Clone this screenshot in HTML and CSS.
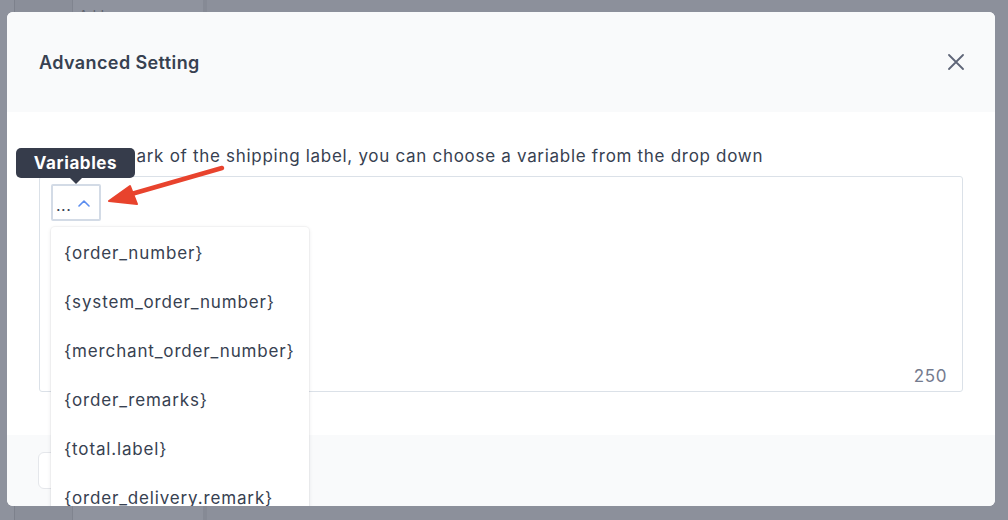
FILE: index.html
```html
<!DOCTYPE html>
<html lang="en">
<head>
<meta charset="utf-8">
<title>Advanced Setting</title>
<link rel="stylesheet" href="styles.css">
</head>
<body>
<div class="backdrop">
  <div class="bcol bcol-a"></div>
  <div class="bcol bcol-b"></div>
  <div class="bcol bcol-c"><span class="btext">Address</span></div>
  <div class="bcol bcol-d"></div>
</div>

<div class="modal">
  <div class="modal-header">
    <h2 class="modal-title">Advanced Setting</h2>
    <button class="close-btn" aria-label="Close">
      <svg width="16" height="16" viewBox="0 0 16 16"><path d="M1 1 L15 15 M15 1 L1 15" stroke="#5f6678" stroke-width="1.8" stroke-linecap="round" fill="none"/></svg>
    </button>
  </div>
  <div class="modal-body">
    <div class="field-label">Orders remark of the shipping label, you can choose a variable from the drop down</div>
    <div class="textbox">
      <div class="var-btn">
        <span class="dots">...</span>
        <svg class="chev" width="12" height="8" viewBox="0 0 12 8"><path d="M1 7 L6 2 L11 7" stroke="#5b8def" stroke-width="1.6" fill="none" stroke-linecap="round" stroke-linejoin="round"/></svg>
        <div class="tooltip">Variables</div>
      </div>
      <ul class="dropdown">
        <li>{order_number}</li>
        <li>{system_order_number}</li>
        <li>{merchant_order_number}</li>
        <li>{order_remarks}</li>
        <li>{total.label}</li>
        <li>{order_delivery.remark}</li>
      </ul>
      <span class="counter">250</span>
    </div>
  </div>
  <div class="modal-footer">
    <button class="cancel-btn">Cancel</button>
  </div>
</div>

<svg class="red-arrow" width="1008" height="520" viewBox="0 0 1008 520">
  <path d="M222 168 L128 195" stroke="#e8432d" stroke-width="4.5" stroke-linecap="round" fill="none"/>
  <path d="M109 201 L130 186 L137 204 Z" fill="#e8432d" stroke="#e8432d" stroke-width="2" stroke-linejoin="round"/>
</svg>
</body>
</html>
```

FILE: styles.css
```css
* { box-sizing: border-box; }
html, body { margin: 0; padding: 0; }
body {
  width: 1008px;
  height: 520px;
  overflow: hidden;
  position: relative;
  font-family: Inter, "Liberation Sans", sans-serif;
  background: #8c909b;
}

.backdrop {
  display: flex;
  height: 520px;
}
.bcol { height: 100%; }
.bcol-a { width: 15px; background: #8e929d; border-right: 1px solid #7d818c; }
.bcol-b { width: 58px; background: #8a8e99; border-right: 1px solid #80848f; }
.bcol-c { width: 134px; background: #8f939e; border-right: 4px solid #868a95; padding: 4px 6px; }
.bcol-d { flex: 1; background: #8c909b; }
.btext { font-size: 13px; color: #5e626c; }

.modal {
  position: absolute;
  left: 7px;
  top: 12px;
  width: 988px;
  height: 494px;
  background: #ffffff;
  border-radius: 6px;
  overflow: hidden;
  display: flex;
  flex-direction: column;
}

.modal-header {
  height: 100px;
  flex: none;
  background: #f9fafb;
  display: flex;
  align-items: center;
  justify-content: space-between;
  padding: 0 31px 0 32px;
}
.modal-title {
  margin: 0;
  font-size: 18px;
  font-weight: 600;
  color: #374151;
  letter-spacing: 0.4px;
}
.close-btn {
  border: 0;
  background: transparent;
  padding: 0;
  width: 16px;
  height: 16px;
  display: flex;
}

.modal-body {
  height: 323px;
  flex: none;
  padding: 32px 32px 0 32px;
}
.field-label {
  font-size: 17px;
  line-height: 24px;
  letter-spacing: 0.7px;
  color: #374151;
  margin-bottom: 8px;
}
.textbox {
  position: relative;
  height: 216px;
  border: 1px solid #dbe1e8;
  border-radius: 3px;
  padding: 7px 11px;
}
.var-btn {
  position: relative;
  width: 50px;
  height: 37px;
  border: 2px solid #d3dbe6;
  border-radius: 2px;
  display: flex;
  align-items: flex-end;
  padding: 0 0 6px 3px;
  gap: 7px;
}
.dots {
  font-size: 16px;
  line-height: 16px;
  color: #374151;
  letter-spacing: 0.5px;
}
.chev { margin-bottom: 6px; }

.tooltip {
  position: absolute;
  left: -37px;
  top: -38px;
  width: 119px;
  height: 30px;
  background: #363c4b;
  border-radius: 5px;
  color: #ffffff;
  font-size: 17px;
  font-weight: 700;
  display: flex;
  align-items: center;
  justify-content: center;
  letter-spacing: 0.6px;
  z-index: 6;
}
.tooltip::after {
  content: "";
  position: absolute;
  left: 54px;
  bottom: -6px;
  border-left: 6px solid transparent;
  border-right: 6px solid transparent;
  border-top: 6px solid #363c4b;
}

.dropdown {
  position: absolute;
  left: 11px;
  top: 50px;
  width: 258px;
  margin: 0;
  padding: 1px 0 0 0;
  list-style: none;
  background: #ffffff;
  border-radius: 4px;
  box-shadow: 0 1px 4px rgba(17, 24, 39, 0.10), 0 0 0 1px rgba(17, 24, 39, 0.03);
  z-index: 5;
}
.dropdown li {
  height: 49px;
  display: flex;
  align-items: center;
  padding-left: 13px;
  font-size: 17px;
  letter-spacing: 0.85px;
  color: #374151;
}

.counter {
  position: absolute;
  right: 15px;
  bottom: 5px;
  font-size: 17px;
  color: #747b8e;
  letter-spacing: 0.6px;
}

.modal-footer {
  flex: 1;
  background: #f9fafb;
  padding: 17px 31px;
}
.cancel-btn {
  height: 37px;
  padding: 0 18px;
  background: #ffffff;
  border: 1px solid #e5e7eb;
  border-radius: 6px;
  font-family: inherit;
  font-size: 15px;
  color: #374151;
}

.red-arrow {
  position: absolute;
  left: 0;
  top: 0;
  pointer-events: none;
}
```
